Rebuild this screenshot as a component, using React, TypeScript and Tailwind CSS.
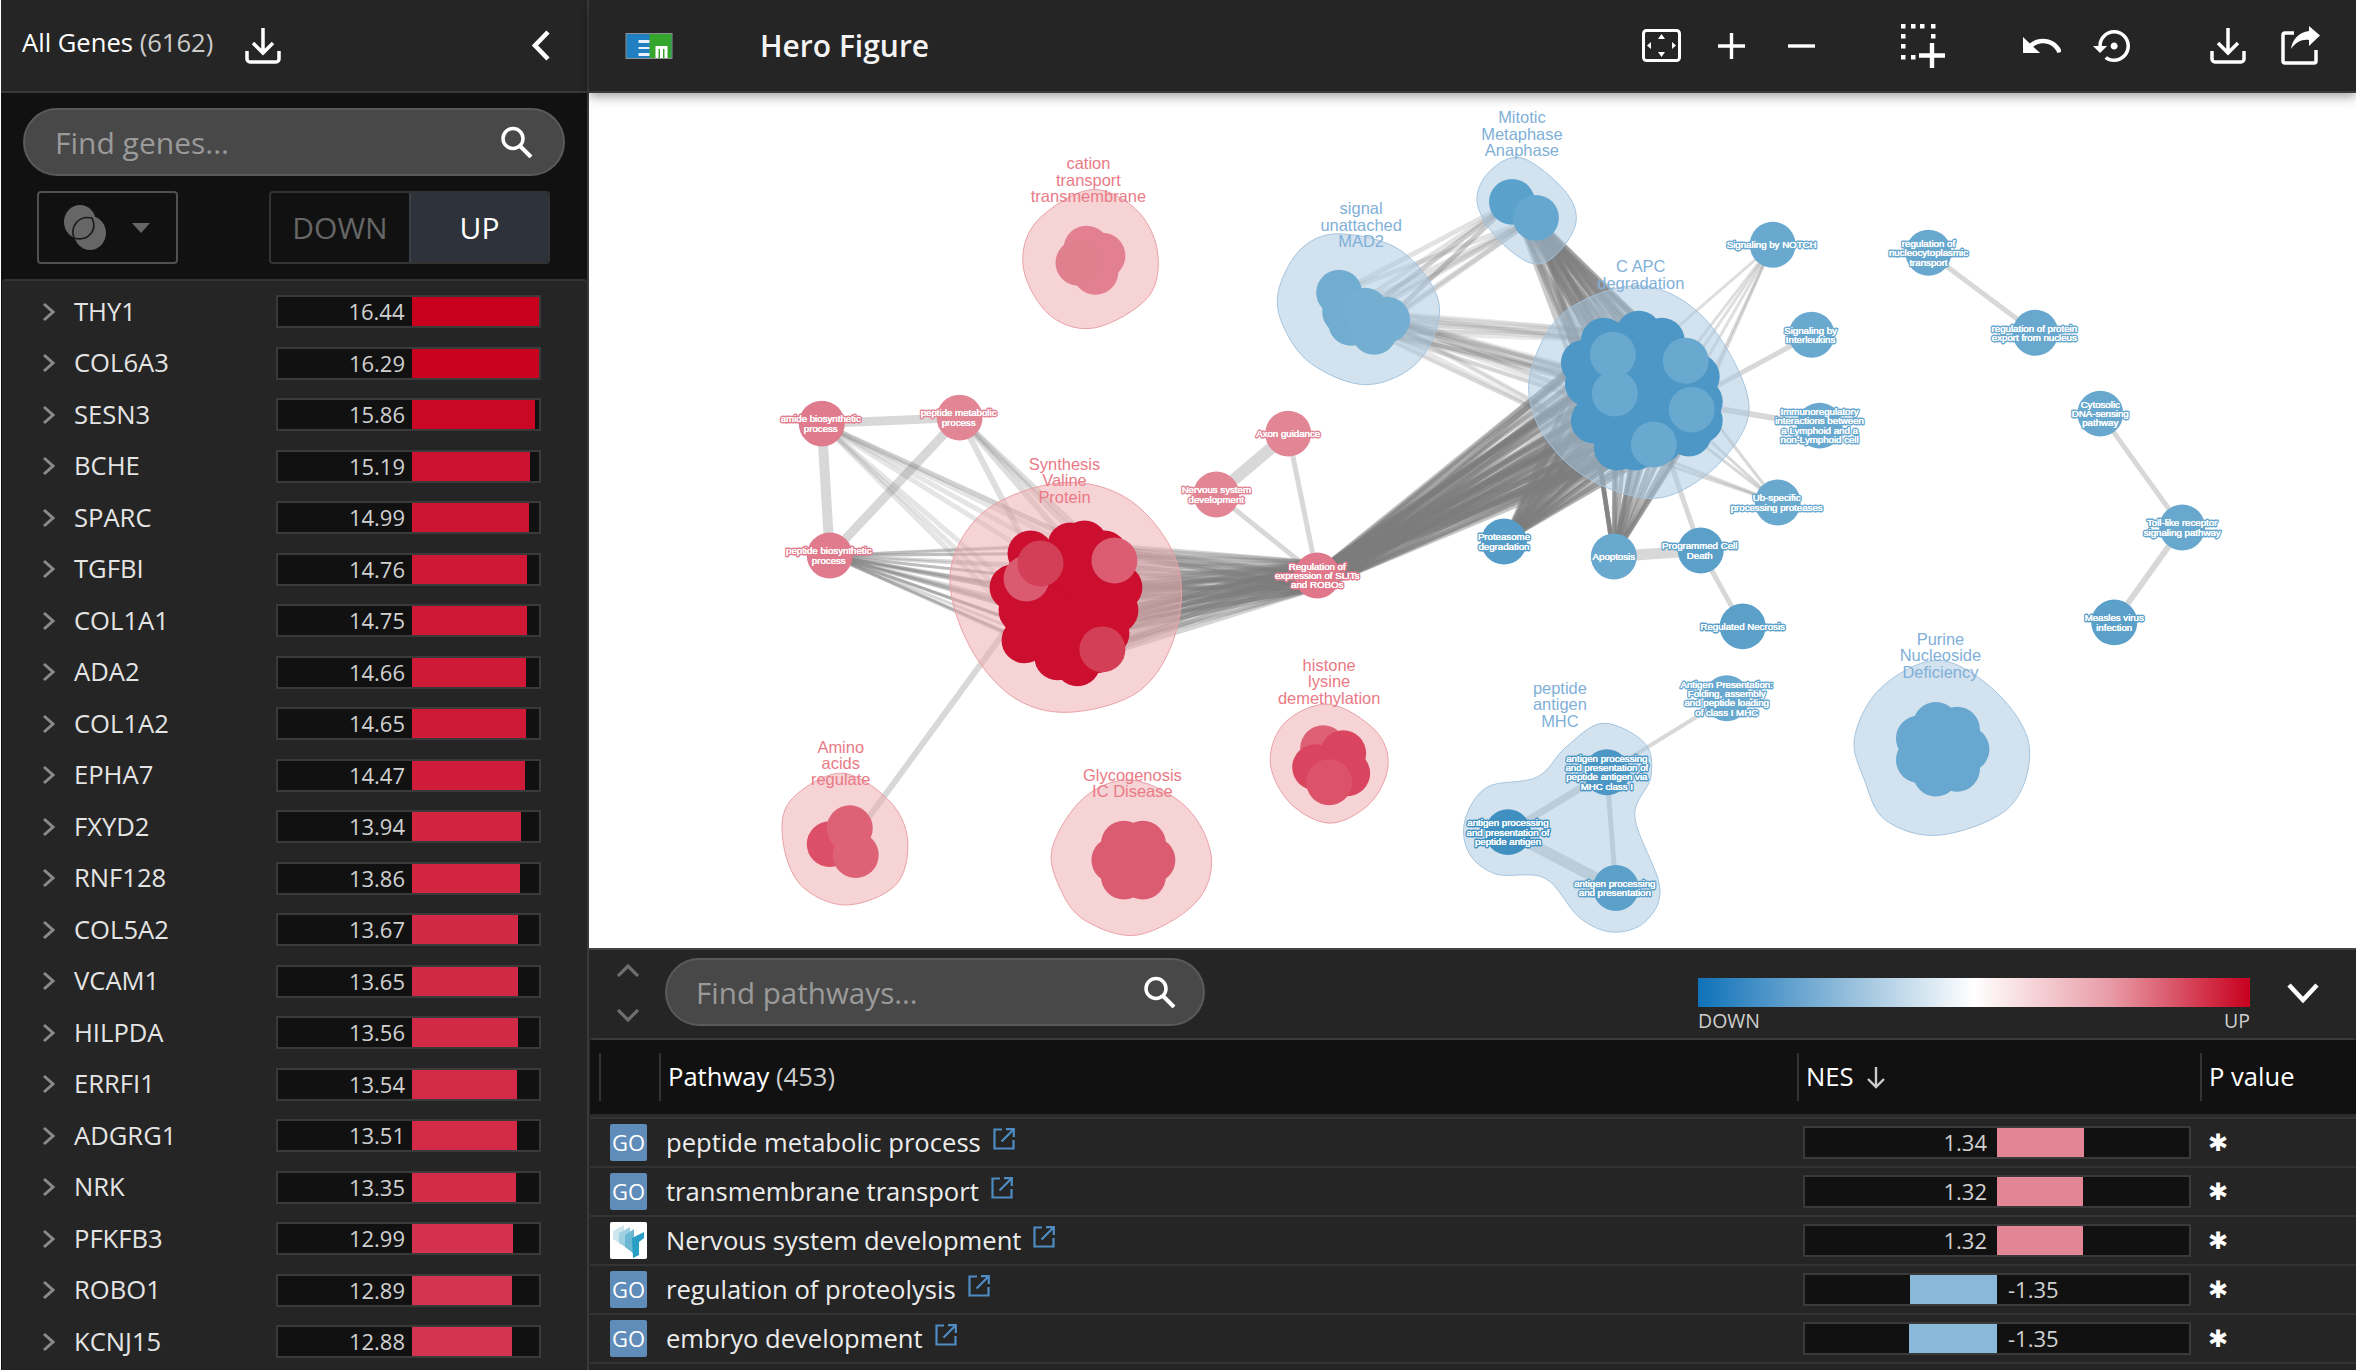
import React from "react";

type P = [number, number];
const genes: [string, number][] = [
  ["THY1", 16.44], ["COL6A3", 16.29], ["SESN3", 15.86], ["BCHE", 15.19], ["SPARC", 14.99], ["TGFBI", 14.76], ["COL1A1", 14.75],
  ["ADA2", 14.66], ["COL1A2", 14.65], ["EPHA7", 14.47], ["FXYD2", 13.94], ["RNF128", 13.86], ["COL5A2", 13.67], ["VCAM1", 13.65],
  ["HILPDA", 13.56], ["ERRFI1", 13.54], ["ADGRG1", 13.51], ["NRK", 13.35], ["PFKFB3", 12.99], ["ROBO1", 12.89], ["KCNJ15", 12.88],
];
const pathways = [
  { name: "peptide metabolic process", nes: "1.34", w: 87, src: "GO" },
  { name: "transmembrane transport", nes: "1.32", w: 86, src: "GO" },
  { name: "Nervous system development", nes: "1.32", w: 86, src: "R" },
  { name: "regulation of proteolysis", nes: "-1.35", w: 87, src: "GO" },
  { name: "embryo development", nes: "-1.35", w: 88, src: "GO" },
];

const blob = (pts: P[]) => {
  const n = pts.length;
  let d = `M${pts[0][0]} ${pts[0][1]}`;
  for (let i = 0; i < n; i++) {
    const p0 = pts[(i - 1 + n) % n], p1 = pts[i], p2 = pts[(i + 1) % n], p3 = pts[(i + 2) % n];
    d += `C${p1[0] + (p2[0] - p0[0]) / 6} ${p1[1] + (p2[1] - p0[1]) / 6} ${p2[0] - (p3[0] - p1[0]) / 6} ${p2[1] - (p3[1] - p1[1]) / 6} ${p2[0]} ${p2[1]}`;
  }
  return d + "Z";
};

const redHulls: P[][] = [
  [[1089, 189], [1135, 208], [1157, 250], [1148, 296], [1095, 327], [1050, 315], [1023, 268], [1035, 222]],
  [[1062, 482], [1130, 500], [1176, 560], [1176, 630], [1140, 690], [1068, 712], [1010, 695], [966, 640], [950, 570], [985, 510]],
  [[840, 773], [888, 800], [907, 840], [895, 885], [845, 905], [800, 885], [782, 840], [790, 800]],
  [[1132, 780], [1186, 807], [1211, 857], [1195, 903], [1137, 935], [1084, 920], [1059, 887], [1052, 847], [1084, 797]],
  [[1329, 704], [1375, 730], [1388, 765], [1370, 803], [1330, 823], [1290, 803], [1270, 762], [1285, 722]],
];
const blueHulls: P[][] = [
  [[1340, 233], [1401, 250], [1439, 303], [1419, 360], [1367, 384], [1311, 363], [1282, 323], [1279, 287], [1302, 247]],
  [[1522, 157], [1565, 190], [1576, 222], [1555, 255], [1530, 262], [1495, 235], [1477, 200], [1490, 170]],
  [[1641, 285], [1706, 319], [1749, 401], [1724, 458], [1670, 495], [1620, 492], [1570, 465], [1536, 420], [1531, 370], [1565, 311]],
  [[1603, 723], [1645, 743], [1651, 777], [1635, 817], [1660, 887], [1645, 922], [1612, 932], [1579, 917], [1545, 878], [1496, 874], [1469, 853], [1465, 820], [1487, 787], [1537, 777], [1566, 747]],
  [[1940, 660], [1998, 693], [2030, 747], [2010, 807], [1940, 835], [1886, 820], [1865, 780], [1855, 737], [1882, 687]],
];

const sig: P[] = [[1339, 292], [1345, 311], [1351, 322], [1374, 331], [1387, 319], [1365, 310]];
const mit: P[] = [[1512, 201], [1536, 217]];
const capcBase: P[] = [[1639, 333], [1604, 340], [1588, 383], [1660, 394], [1700, 401], [1689, 433], [1617, 447], [1635, 447], [1662, 340], [1697, 376], [1584, 362], [1594, 420], [1630, 390], [1640, 420], [1675, 360], [1615, 415], [1660, 440], [1700, 420], [1610, 370], [1650, 360], [1640, 400], [1670, 415], [1625, 360], [1680, 385]];
const capcLight: P[] = [[1613, 354], [1615, 393], [1692, 409], [1654, 444], [1686, 360]];
const redBase: P[] = [[1030, 553], [1070, 545], [1084, 543], [1104, 553], [1119, 587], [1012, 587], [1021, 610], [1035, 637], [1057, 657], [1077, 663], [1052, 633], [1106, 633], [1066, 600], [1090, 600], [1040, 590], [1075, 570], [1115, 610], [1024, 640], [1096, 650], [1050, 610], [1090, 625], [1070, 640], [1105, 585], [1050, 565], [1075, 620]];
const redLight: [number, number, string][] = [[1026, 578, "#da5a70"], [1114, 560, "#dc5c72"], [1040, 563, "#d43f58"], [1102, 649, "#d33f57"]];

const lines: [P, P, number, number, string][] = [];
const fan = (a: P[], b: P[], w: number, o: number, c = "#7d7d7d") => a.forEach((p) => b.forEach((q) => lines.push([p, q, w, o, c])));
const NOTCH: P = [1773, 244], IL: P = [1812, 334], IMM: P = [1820, 425], UB: P = [1778, 502], PCD: P = [1701, 550], NEC: P = [1743, 626], APO: P = [1614, 556], PROT: P = [1504, 541], SLIT: P = [1317, 575], AX: P = [1288, 433], NERV: P = [1216, 494], AM: P = [821, 423], PM: P = [959, 417], PB: P = [829, 555];
const AP1: P = [1607, 772], AP2: P = [1508, 832], AP3: P = [1616, 888], APP: P = [1727, 698];
const light = "#c8c8c8";
fan([AM], [PM], 9, 0.7, light); fan([AM], [PB], 10, 0.7, light); fan([PM], [PB], 9, 0.7, light);
fan([AX], [NERV], 12, 0.7, light); fan([AX], [SLIT], 5, 0.7, light); fan([NERV], [SLIT], 5, 0.7, light);
fan([APO], [PCD], 11, 0.7, light); fan([PCD], [NEC], 5, 0.7, light); fan([PCD], [[1670, 460]], 5, 0.7, light);
fan([[855, 835]], [[1005, 630]], 6, 0.7, light); fan([IL], [[1690, 400]], 5, 0.7, light); fan([IMM], [[1700, 405]], 6, 0.7, light);
fan([[1929, 252]], [[2036, 332]], 5, 0.7, light); fan([[2101, 413]], [[2183, 527]], 5, 0.7, light); fan([[2183, 527]], [[2115, 622]], 6, 0.7, light);
fan([APP], [AP1], 4, 0.7, light); fan([AP1], [AP2], 7, 0.6, "#aeb4b9"); fan([AP1], [AP3], 5, 0.6, "#aeb4b9"); fan([AP2], [AP3], 11, 0.6, "#aeb4b9");
fan([PB], redBase, 3, 0.3);
fan([AM], redBase.slice(0, 8), 5, 0.2);
fan([PM], redBase.slice(0, 4), 6, 0.25);
fan([SLIT, [1317, 562], [1317, 588]], redBase, 4.5, 0.32);
fan([SLIT, [1325, 565], [1325, 585]], capcBase, 4.5, 0.42);
fan([SLIT], [[1570, 395], [1575, 420], [1590, 450]], 6, 0.6);
fan([PROT], capcBase, 4.5, 0.6);
fan([APO], capcBase.slice(2, 18), 4.5, 0.6);
fan(sig, mit, 5, 0.22);
fan(sig.slice(1), capcBase.slice(0, 7), 4, 0.18);
fan(mit, capcBase, 4.5, 0.4);
fan([NOTCH], capcBase.slice(4, 10), 3, 0.25);
fan([UB], capcBase.slice(3, 8), 3, 0.3);

const Hull = ({ pts, c, s }: { pts: P[]; c: string; s: string }) => <path d={blob(pts)} fill={c} fillOpacity={0.5} stroke={s} strokeWidth={1} />;
const Title = ({ x, y, t, c }: { x: number; y: number; t: string[]; c: string }) => (
  <text fontFamily="'Liberation Sans',sans-serif" fontSize={16.5} fill={c} textAnchor="middle">
    {t.map((l, i) => <tspan key={l} x={x} y={y + 5.5 + i * 16.4}>{l}</tspan>)}
  </text>
);
const Node = ({ x, y, c, t, tx = 0 }: { x: number; y: number; c: string; t: string[]; tx?: number }) => (
  <g>
    <circle cx={x} cy={y} r={23} fill={c} />
    <text fontFamily="'Liberation Sans',sans-serif" fontSize={9.7} fill="#fff" textAnchor="middle" stroke={c} strokeWidth={3} strokeLinejoin="round" paintOrder="stroke">
      {t.map((l, i) => <tspan key={l} x={x + tx} y={y + 3.5 + (i - (t.length - 1) / 2) * 9.4}>{l}</tspan>)}
    </text>
    <text fontFamily="'Liberation Sans',sans-serif" fontSize={9.7} fill="#fff" textAnchor="middle" stroke="#fff" strokeWidth={0.25}>
      {t.map((l, i) => <tspan key={l} x={x + tx} y={y + 3.5 + (i - (t.length - 1) / 2) * 9.4}>{l}</tspan>)}
    </text>
  </g>
);
const Dots = ({ pts, c }: { pts: P[]; c: string }) => <>{pts.map((p, i) => <circle key={i} cx={p[0]} cy={p[1]} r={23} fill={c} />)}</>;

const Network = () => {
  const R = "#ea7a86", B = "#7fb0d8";
  const ring = (cx: number, cy: number, n: number, r: number): P[] => Array.from({ length: n }, (_, i) => [cx + r * Math.cos((i / n) * 6.283), cy + r * Math.sin((i / n) * 6.283)] as P);
  return (
    <svg className="block w-full h-full" viewBox="589 92 1767 856">
      {lines.map(([a, b, w, o, c], i) => <line key={i} x1={a[0]} y1={a[1]} x2={b[0]} y2={b[1]} stroke={c} strokeWidth={w} strokeOpacity={o} />)}
      {redHulls.map((h, i) => <Hull key={i} pts={h} c="#eea7ab" s="#e9a0a6" />)}
      {blueHulls.map((h, i) => <Hull key={i} pts={h} c="#a7c5df" s="#a4c4de" />)}
      <Dots pts={[[1086, 248], [1102, 255], [1095, 271]]} c="#e27f90" />
      <Dots pts={[[1078, 262]]} c="#e0808f" />
      <Dots pts={redBase} c="#cc0f2e" />
      {redLight.map(([x, y, c], i) => <circle key={i} cx={x} cy={y} r={23} fill={c} />)}
      <Dots pts={[[829, 844]]} c="#dc4f66" />
      <Dots pts={[[849, 828], [855, 855]]} c="#dd6275" />
      <Dots pts={ring(1133, 860, 6, 19)} c="#db5b70" /><circle cx={1133} cy={860} r={22} fill="#db5b70" />
      <Dots pts={[[1323, 748]]} c="#de6075" />
      <Dots pts={[[1343, 753], [1347, 773], [1315, 767]]} c="#d9455f" />
      <Dots pts={[[1329, 782]]} c="#db5269" />
      <Dots pts={[[1512, 201]]} c="#5aa2cb" /><Dots pts={[[1536, 217]]} c="#66a7cf" />
      <Dots pts={sig.slice(0, 3)} c="#70add1" /><Dots pts={sig.slice(3)} c="#74afd2" />
      <Dots pts={capcBase} c="#4c97c5" />
      <Dots pts={capcLight} c="#6aa9cf" />
      <Dots pts={ring(1942, 749, 7, 25)} c="#68a7cf" /><circle cx={1942} cy={749} r={30} fill="#68a7cf" />

      <Title x={1088} y={163} t={["cation", "transport", "transmembrane"]} c={R} />
      <Title x={1361} y={208} t={["signal", "unattached", "MAD2"]} c={B} />
      <Title x={1522} y={117} t={["Mitotic", "Metaphase", "Anaphase"]} c={B} />
      <Title x={1641} y={266} t={["C APC", "degradation"]} c={B} />
      <Title x={1064} y={464} t={["Synthesis", "Valine", "Protein"]} c={R} />
      <Title x={840} y={747} t={["Amino", "acids", "regulate"]} c={R} />
      <Title x={1132} y={775} t={["Glycogenosis", "IC Disease"]} c={R} />
      <Title x={1329} y={665} t={["histone", "lysine", "demethylation"]} c={R} />
      <Title x={1560} y={688} t={["peptide", "antigen", "MHC"]} c={B} />
      <Title x={1941} y={639} t={["Purine", "Nucleoside", "Deficiency"]} c={B} />

      <Node x={821} y={423} c="#e07a8d" t={["amide biosynthetic", "process"]} tx={-1} />
      <Node x={959} y={417} c="#e28696" t={["peptide metabolic", "process"]} tx={-1} />
      <Node x={829} y={555} c="#e07a8d" t={["peptide biosynthetic", "process"]} tx={-1} />
      <Node x={1288} y={433} c="#e28696" t={["Axon guidance"]} />
      <Node x={1216} y={494} c="#e28696" t={["Nervous system", "development"]} />
      <Node x={1317} y={575} c="#e0778a" t={["Regulation of", "expression of SLITs", "and ROBOs"]} />
      <Node x={1773} y={244} c="#6aa9cf" t={["Signaling by NOTCH"]} tx={-1} />
      <Node x={1812} y={334} c="#6aa9cf" t={["Signaling by", "Interleukins"]} tx={-1} />
      <Node x={1820} y={425} c="#6aa9cf" t={["Immunoregulatory", "interactions between", "a Lymphoid and a", "non-Lymphoid cell"]} />
      <Node x={1778} y={502} c="#6aa9cf" t={["Ub-specific", "processing proteases"]} tx={-1} />
      <Node x={1701} y={550} c="#5aa0c9" t={["Programmed Cell", "Death"]} tx={-1} />
      <Node x={1743} y={626} c="#5aa0c9" t={["Regulated Necrosis"]} />
      <Node x={1614} y={556} c="#6aa9cf" t={["Apoptosis"]} />
      <Node x={1504} y={541} c="#559dc8" t={["Proteasome", "degradation"]} />
      <Node x={1929} y={252} c="#69a8ce" t={["regulation of", "nucleocytoplasmic", "transport"]} />
      <Node x={2036} y={332} c="#69a8ce" t={["regulation of protein", "export from nucleus"]} tx={-1} />
      <Node x={2101} y={413} c="#69a8ce" t={["Cytosolic", "DNA-sensing", "pathway"]} />
      <Node x={2183} y={527} c="#69a8ce" t={["Toll-like receptor", "signaling pathway"]} />
      <Node x={2115} y={622} c="#5aa0c9" t={["Measles virus", "infection"]} />
      <Node x={1607} y={772} c="#4c97c5" t={["antigen processing", "and presentation of", "peptide antigen via", "MHC class I"]} />
      <Node x={1508} y={832} c="#3f90c0" t={["antigen processing", "and presentation of", "peptide antigen"]} />
      <Node x={1616} y={888} c="#5aa0c9" t={["antigen processing", "and presentation"]} tx={-1} />
      <Node x={1727} y={698} c="#6aa9cf" t={["Antigen Presentation:", "Folding, assembly", "and peptide loading", "of class I MHC"]} />
    </svg>
  );
};

const Download = () => (
  <svg width="36" height="36" viewBox="0 0 36 36" fill="none" stroke="#fff" strokeWidth="3.5">
    <path d="M18 0V25M8 15L18 25L28 15" />
    <path d="M2 23V31a3 3 0 0 0 3 3H31a3 3 0 0 0 3-3V23" />
  </svg>
);
const Search = () => (
  <svg width="33" height="32" viewBox="0 0 33 32" fill="none" stroke="#fff">
    <circle cx="13" cy="12.5" r="10" strokeWidth="3.5" />
    <path d="M20 20L31 31" strokeWidth="4" />
  </svg>
);
const Fit = () => (
  <svg width="39" height="33" viewBox="0 0 39 33">
    <rect x="1.5" y="1.5" width="36" height="30" rx="3" fill="none" stroke="#fff" strokeWidth="3" />
    <path d="M19.5 5L23 10H16ZM19.5 28L16 23H23ZM5 16.5L9 13V20ZM34 16.5L30 13V20Z" fill="#fff" />
  </svg>
);
const Plus = () => <svg width="27" height="26" viewBox="0 0 27 26" stroke="#fff" strokeWidth="3.4"><path d="M13.5 0V26M0 13H27" /></svg>;
const Minus = () => <svg width="27" height="26" viewBox="0 0 27 26" stroke="#fff" strokeWidth="3.4"><path d="M0 13H27" /></svg>;
const Select = () => (
  <svg width="44" height="44" viewBox="0 0 44 44" fill="#fff">
    {[[0, 0], [10, 0], [19, 0], [30, 0], [0, 10], [30, 10], [0, 20], [0, 31], [10, 31]].map(([x, y]) => <rect key={`${x}-${y}`} x={x} y={y} width="4.5" height="4.5" />)}
    <path d="M31 19V44M18 31.5H44" stroke="#fff" strokeWidth="4.4" />
  </svg>
);
const Undo = () => (
  <svg width="38" height="17" viewBox="2 7 20 9.5" preserveAspectRatio="none" fill="#fff">
    <path d="M12.5 8c-2.65 0-5.05.99-6.9 2.6L2 7v9h9l-3.62-3.62c1.39-1.16 3.16-1.88 5.12-1.88 3.54 0 6.55 2.31 7.6 5.5l2.37-.78C21.08 11.03 17.15 8 12.5 8z" />
  </svg>
);
const History = () => (
  <svg width="37" height="32" viewBox="0 3 21 18" preserveAspectRatio="none" fill="#fff">
    <path d="M14 12c0-1.1-.9-2-2-2s-2 .9-2 2 .9 2 2 2 2-.9 2-2zm-2-9c-4.97 0-9 4.03-9 9H0l4 4 4-4H5c0-3.87 3.13-7 7-7s7 3.13 7 7-3.13 7-7 7c-1.51 0-2.91-.49-4.06-1.3l-1.42 1.44C8.04 20.3 9.94 21 12 21c4.97 0 9-4.03 9-9s-4.03-9-9-9z" />
  </svg>
);
const Share = () => (
  <svg width="39" height="39" viewBox="0 0 39 39">
    <path d="M13 7H4a2 2 0 0 0-2 2V35a2 2 0 0 0 2 2H33a2 2 0 0 0 2-2V24" fill="none" stroke="#fff" strokeWidth="3.5" />
    <path d="M28 0L39 9.5L28 20V14C21 13 15 16 10 23C11 14 18 6 28 5Z" fill="#fff" />
  </svg>
);
const Logo = () => (
  <svg width="48" height="26" viewBox="0 0 47 26">
    <rect x="0.5" y="0.5" width="46" height="25" fill="#1f7fc0" stroke="#8c8f92" />
    <rect x="24" y="1" width="22" height="24" fill="#34a52d" />
    <path d="M13 7H24V10H13ZM13 14H24V16H13ZM13 20H24V23H13Z" fill="#e8f1f8" />
    <path d="M30 25V13H42V25H39V16H37.5V25H34.5V16H33V25Z" fill="#fff" />
  </svg>
);
const LinkOut = () => (
  <svg width="22" height="22" viewBox="0 0 22 22" fill="none" stroke="#4f8cc4" strokeWidth="2.2">
    <path d="M9 1.5H1.5V20.5H20.5V12" />
    <path d="M8.5 13.5L20 2M13 1.2H20.8V9" />
  </svg>
);
const Reactome = () => (
  <svg width="37" height="37" viewBox="0 0 37 37" className="rounded-[2px]">
    <rect width="37" height="37" fill="#fff" />
    <path d="M3 9L14 3V24L3 17Z" fill="#cfe6ef" />
    <path d="M9 11L20 5V28L9 21Z" fill="#9fd0e2" />
    <path d="M15 13L24 7V32L15 25Z" fill="#6cb8d4" />
    <path d="M22 16L34 10V16L29 20V33L23 36Z" fill="#2a9fc5" />
  </svg>
);

export default function App() {
  return (
    <div className="flex w-[2356px] h-[1372px] overflow-hidden bg-white font-['Open_Sans',sans-serif] text-white">
      <aside className="ml-px w-[588px] h-[1370px] flex flex-col bg-[#111] border-r-2 border-[#3a3a3a] shrink-0">
        <div className="h-[93px] shrink-0 bg-[#252525] border-b-2 border-[#3a3a3a] flex items-center pl-[21px]">
          <span className="text-[25.6px] w-[224px] -mt-[5px]">All Genes <span className="text-[#ccc]">(6162)</span></span>
          <span className="-ml-[1px]"><Download /></span>
          <svg className="ml-[250px]" width="19" height="31" viewBox="0 0 19 31" fill="none" stroke="#fff" strokeWidth="4.6"><path d="M17 2L4 15.5L17 29" /></svg>
        </div>
        <div className="mt-[15px] mx-[22px] h-[68px] rounded-[34px] bg-[#484848] border-2 border-[#5a5a5a] flex items-center justify-between pl-[30px] pr-[30px] shrink-0">
          <span className="text-[30px] text-[#9a9a9a]">Find genes...</span>
          <Search />
        </div>
        <div className="mt-[15px] flex items-center shrink-0 h-[73px]">
          <div className="ml-[36px] w-[141px] h-[73px] rounded-[4px] border-2 border-[#505050] flex items-center">
            <svg className="ml-[23px]" width="46" height="46" viewBox="0 0 46 46">
              <ellipse cx="18" cy="17" rx="16" ry="17" fill="#666" />
              <ellipse cx="28" cy="28" rx="16" ry="17" fill="#666" />
              <path d="M12 33C8 22 16 10 30 13C36 25 26 37 12 33Z" fill="none" stroke="#1a1a1a" strokeWidth="1.6" />
            </svg>
            <svg className="ml-[24px]" width="18" height="10" viewBox="0 0 18 10"><path d="M0 0H18L9 10Z" fill="#666" /></svg>
          </div>
          <div className="ml-[91px] w-[281px] h-[73px] rounded-[4px] border-2 border-[#333] flex overflow-hidden text-[30px]">
            <div className="w-[138px] flex items-center justify-center text-[#666]">DOWN</div>
            <div className="flex-1 flex items-center justify-center bg-[#2d323b] border-l-2 border-[#3a3f48]">UP</div>
          </div>
        </div>
        <div className="mt-[15px] flex-1 rounded-t-[4px] bg-[#252525] border-t-2 border-[#333] pt-[5px] ml-px">
          {genes.map(([g, v]) => {
            const t = (16.44 - v) / (16.44 - 12.88);
            return (
              <div key={g} className="h-[51.5px] flex items-center">
                <svg className="ml-[40px] shrink-0" width="13" height="20" viewBox="0 0 13 20" fill="none" stroke="#8a8a8a" strokeWidth="3"><path d="M2 2L11 10L2 18" /></svg>
                <span className="ml-[19px] w-[202px] text-[25.6px] text-[#e4e4e4]">{g}</span>
                <div className="w-[265px] h-[33px] border-2 border-[#3a3a3a] bg-[#111] flex">
                  <div className="w-[134px] pr-[7px] text-right text-[22px] leading-[29px] text-[#d0d0d0]">{v.toFixed(2)}</div>
                  <div className="h-full" style={{ width: (v / 16.44) * 128, background: `rgb(${200 + 12 * t},${51 * t},${30 + 50 * t})` }} />
                </div>
              </div>
            );
          })}
        </div>
      </aside>
      <main className="flex-1 flex flex-col min-w-0">
        <header className="relative z-10 h-[93px] shrink-0 bg-[#252525] border-b-2 border-[#3a3a3a] shadow-[0_4px_10px_rgba(0,0,0,0.35)] flex items-center pl-[36px] pr-[36px]">
          <Logo />
          <span className="ml-[87px] text-[30px] font-semibold text-[#f4f4f4]">Hero Figure</span>
          <div className="ml-auto flex items-center">
            <Fit />
            <span className="ml-[37px]"><Plus /></span>
            <span className="ml-[43px]"><Minus /></span>
            <span className="ml-[86px]"><Select /></span>
            <span className="ml-[78px]"><Undo /></span>
            <span className="ml-[32px]"><History /></span>
            <span className="ml-[80px]"><Download /></span>
            <span className="ml-[35px]"><Share /></span>
          </div>
        </header>
        <div className="h-[855px] shrink-0 bg-white"><Network /></div>
        <section className="h-[422px] shrink-0 bg-[#252525] border-t-2 border-[#444] flex flex-col">
          <div className="h-[88px] shrink-0 flex relative">
            <div className="w-[76px] flex flex-col items-center pt-[14px] pl-[2px] gap-[32px]">
              <svg width="22" height="13" viewBox="0 0 22 13" fill="none" stroke="#6e6e6e" strokeWidth="3.2"><path d="M1 12L11 2L21 12" /></svg>
              <svg width="22" height="13" viewBox="0 0 22 13" fill="none" stroke="#6e6e6e" strokeWidth="3.2"><path d="M1 1L11 11L21 1" /></svg>
            </div>
            <div className="mt-[8px] w-[540px] h-[68px] rounded-[34px] bg-[#484848] border-2 border-[#5a5a5a] flex items-center justify-between pl-[29px] pr-[27px]">
              <span className="text-[29.6px] text-[#9a9a9a] mt-[2px]">Find pathways...</span>
              <Search />
            </div>
            <div className="ml-[493px] w-[552px] pt-[28px]">
              <div className="h-[29px] bg-[linear-gradient(90deg,#0f72b8_0%,#8ab8d8_25%,#ffffff_50%,#e89aa5_75%,#c8001e_100%)]" />
              <div className="flex justify-between text-[19.5px] leading-[28px] text-[#cfcfcf]"><span>DOWN</span><span>UP</span></div>
            </div>
            <svg className="ml-[37px] mt-[33px]" width="32" height="20" viewBox="0 0 32 20" fill="none" stroke="#fff" strokeWidth="4.6"><path d="M2 2L16 17L30 2" /></svg>
          </div>
          <div className="flex-1 rounded-t-[4px] border-t-2 border-[#3a3a3a] ml-px">
            <div className="h-[74px] bg-[#111] flex items-center pl-[9px] text-[25.6px]">
              <div className="w-[60px] h-[48px] border-l-2 border-[#333]" />
              <div className="w-[1138px] h-[48px] border-l-2 border-[#333] flex items-center pl-[7px]">Pathway&nbsp;<span className="text-[#ccc]">(453)</span></div>
              <div className="w-[403px] h-[48px] border-l-2 border-[#333] flex items-center pl-[7px] gap-[12px]">
                NES
                <svg width="20" height="24" viewBox="0 0 20 24" fill="none" stroke="#ccc" strokeWidth="2.4"><path d="M10 2V22M2 14L10 22L18 14" /></svg>
              </div>
              <div className="flex-1 h-[48px] border-l-2 border-[#333] flex items-center pl-[7px]">P value</div>
            </div>
            <div className="h-[5px] bg-[#2c2c2c] border-b-2 border-[#333]" />
            {pathways.map((p) => (
              <div key={p.name} className="h-[49px] border-b-2 border-[#333] flex items-center text-[25.6px]">
                <div className="ml-[20px] w-[37px] h-[37px] rounded-[2px] bg-[#5f8cb8] flex items-center justify-center text-[22px] font-medium shrink-0">
                  {p.src === "GO" ? "GO" : <Reactome />}
                </div>
                <div className="ml-[19px] flex-1 flex items-center text-[#ececec]">
                  <span className="mt-[2px]">{p.name}</span>
                  <span className="ml-[12px] -mt-[6px]"><LinkOut /></span>
                </div>
                <div className="w-[388px] h-[33px] border-2 border-[#3a3a3a] bg-[#111] flex text-[22px] leading-[28px] text-[#d0d0d0]">
                  <div className="w-[192px] flex justify-end">
                    {p.nes.startsWith("-") ? <div className="h-full bg-[#8ab8d8]" style={{ width: p.w }} /> : <span className="pr-[10px]">{p.nes}</span>}
                  </div>
                  <div className="flex-1 flex">
                    {p.nes.startsWith("-") ? <span className="pl-[11px]">{p.nes}</span> : <div className="h-full bg-[#e28696]" style={{ width: p.w }} />}
                  </div>
                </div>
                <div className="w-[165px] pl-[17px] text-[24px] leading-none font-['DejaVu_Sans',sans-serif]">✱</div>
              </div>
            ))}
          </div>
        </section>
      </main>
    </div>
  );
}
